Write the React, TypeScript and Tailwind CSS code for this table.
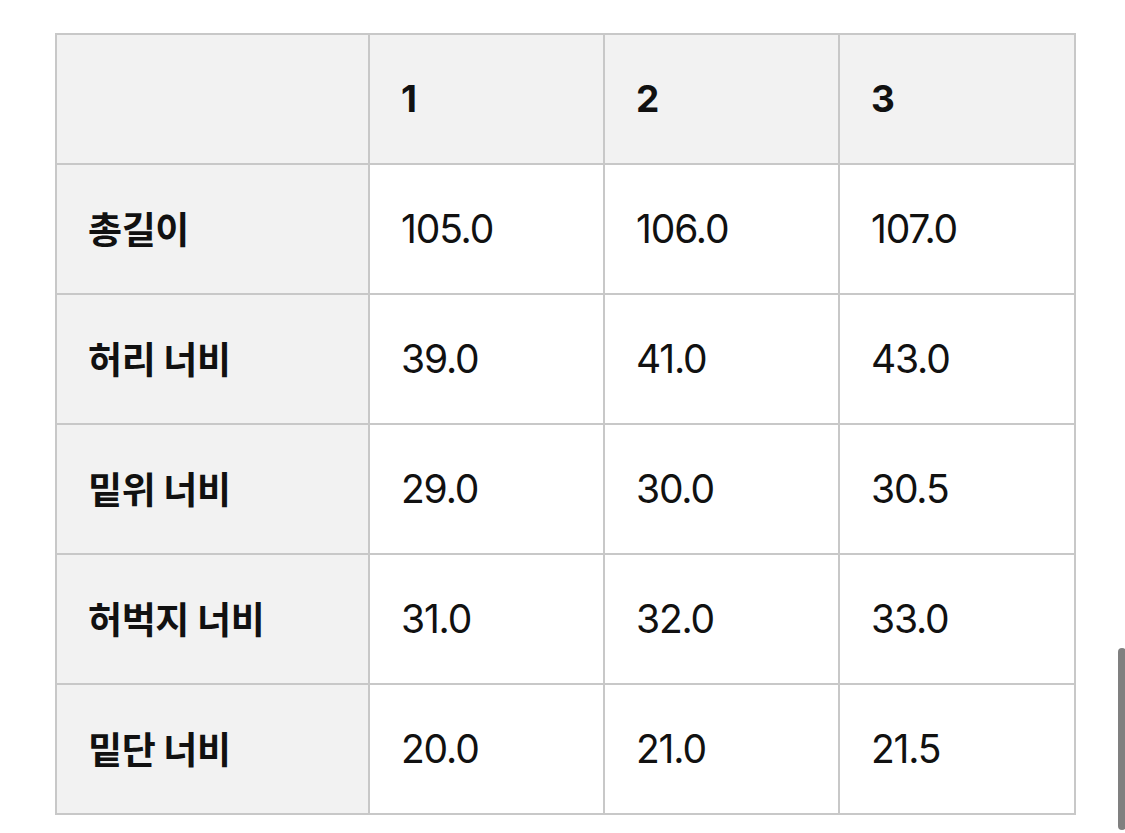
import React from "react";

const cols = ["", "1", "2", "3"];
const rows: [string, string, string, string][] = [
  ["총길이", "105.0", "106.0", "107.0"],
  ["허리 너비", "39.0", "41.0", "43.0"],
  ["밑위 너비", "29.0", "30.0", "30.5"],
  ["허벅지 너비", "31.0", "32.0", "33.0"],
  ["밑단 너비", "20.0", "21.0", "21.5"],
];

const font = { fontFamily: 'Inter, "Noto Sans CJK KR", sans-serif' };

export default function App() {
  return (
    <div className="relative w-[1125px] h-[833px] bg-white overflow-hidden" style={font}>
      <div className="pt-[33px] pl-[55px]">
        <div className="grid grid-cols-[313px_235px_235px_236px] w-fit border-l-2 border-t-2 border-[#c8c8c8] text-[#111]">
          {cols.map((c, i) => (
            <div
              key={"h" + i}
              className="h-[130px] flex items-center pl-[31px] bg-[#f2f2f2] border-r-2 border-b-2 border-[#c8c8c8] text-[37px] font-bold"
            >
              {c}
            </div>
          ))}
          {rows.map((r, ri) =>
            r.map((v, ci) => (
              <div
                key={ri + "-" + ci}
                className={
                  ci === 0
                    ? "h-[130px] flex items-center pl-[31px] bg-[#f2f2f2] border-r-2 border-b-2 border-[#c8c8c8] text-[37px] font-bold tracking-[-0.01em]"
                    : "h-[130px] flex items-center pl-[31px] bg-white border-r-2 border-b-2 border-[#c8c8c8] text-[39px] tracking-[-0.03em]"
                }
                style={ci === 0 ? { fontFamily: '"Noto Sans CJK KR", sans-serif' } : undefined}
              >
                {v}
              </div>
            ))
          )}
        </div>
      </div>
      <div className="absolute left-[1118px] top-[648px] w-[8px] h-[182px] rounded-full bg-[#808080]" />
    </div>
  );
}
